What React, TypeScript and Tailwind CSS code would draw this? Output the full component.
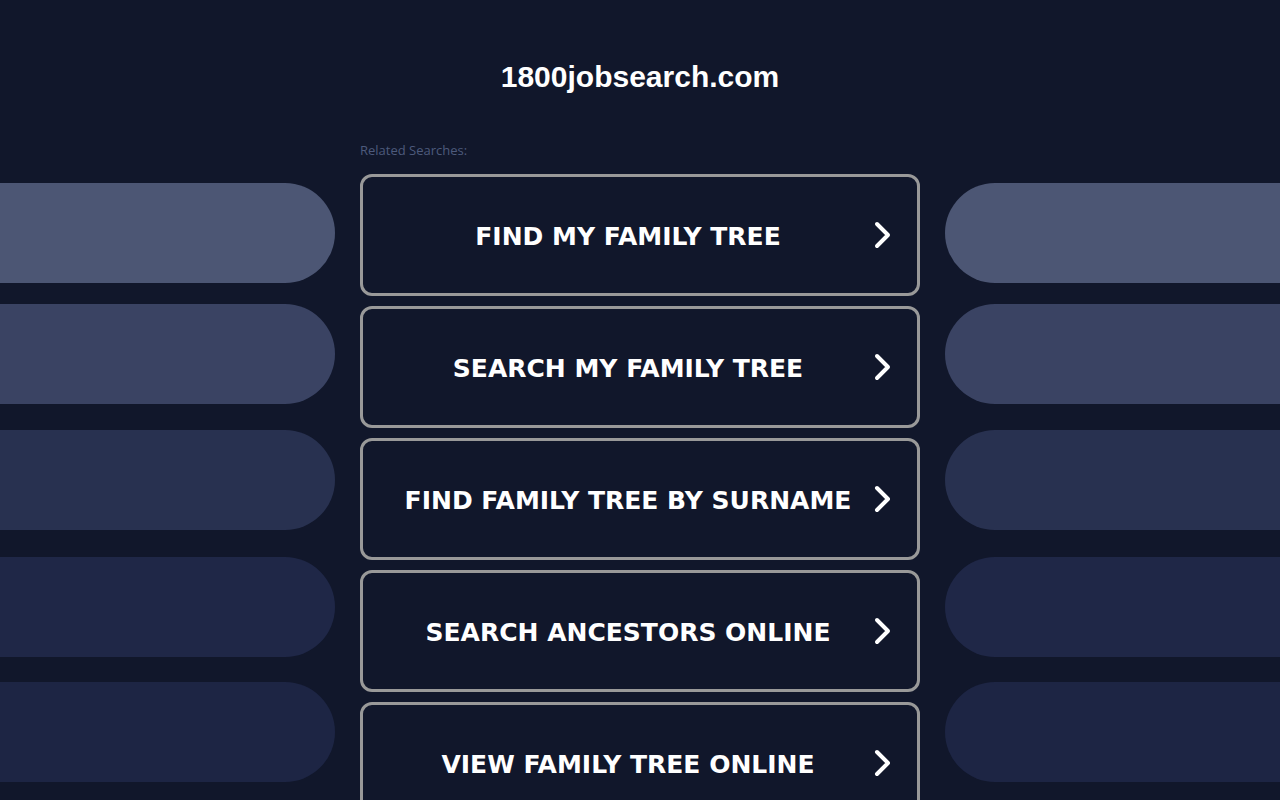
const searches = [
  'FIND MY FAMILY TREE',
  'SEARCH MY FAMILY TREE',
  'FIND FAMILY TREE BY SURNAME',
  'SEARCH ANCESTORS ONLINE',
  'VIEW FAMILY TREE ONLINE',
];

const pills = [
  { color: 'bg-[#4c5674]', mt: 'mt-[183px]' },
  { color: 'bg-[#3a4363]', mt: 'mt-[21px]' },
  { color: 'bg-[#283150]', mt: 'mt-[26px]' },
  { color: 'bg-[#1f2747]', mt: 'mt-[27px]' },
  { color: 'bg-[#1d2544]', mt: 'mt-[25px]' },
];

function Chevron() {
  return (
    <svg className="w-[21px] h-[29px]" viewBox="0 0 21 29" fill="none" stroke="currentColor" strokeWidth={4} strokeLinecap="round" strokeLinejoin="round">
      <path d="M4 3.5l11 11-11 11" />
    </svg>
  );
}

export default function App() {
  return (
    <div className="h-[800px] overflow-hidden bg-[#11172b] flex" style={{ fontFamily: '"DejaVu Sans", sans-serif' }}>
      {/* left decorative pills */}
      <div className="w-[335px] shrink-0 flex flex-col">
        {pills.map((p, i) => (
          <div key={i} className={`h-[100px] rounded-r-[50px] ${p.color} ${p.mt}`} />
        ))}
      </div>

      <div className="flex-1 flex flex-col items-center">
        <h1 className="mt-[58px] text-[30px] leading-[38px] font-bold text-white" style={{ fontFamily: '"Liberation Sans", Arial, sans-serif' }}>
          1800jobsearch.com
        </h1>
        <div className="w-[560px] mt-[46px]">
          <p className="text-[13px] leading-[16px] text-[#4d5a7c]" style={{ fontFamily: '"Open Sans", sans-serif' }}>Related Searches:</p>
          <div className="mt-[16px] flex flex-col gap-[10px]">
            {searches.map(s => (
              <a key={s} href="#" className="relative h-[122px] shrink-0 rounded-[12px] border-[3px] border-[#999999] flex items-center text-white">
                <span className="flex-1 text-center text-[25px] font-bold pr-[24px] pt-[4px]">{s}</span>
                <span className="absolute right-[23px] top-1/2 -translate-y-1/2 flex"><Chevron /></span>
              </a>
            ))}
          </div>
        </div>
      </div>

      {/* right decorative pills */}
      <div className="w-[335px] shrink-0 flex flex-col">
        {pills.map((p, i) => (
          <div key={i} className={`h-[100px] rounded-l-[50px] ${p.color} ${p.mt}`} />
        ))}
      </div>
    </div>
  );
}
